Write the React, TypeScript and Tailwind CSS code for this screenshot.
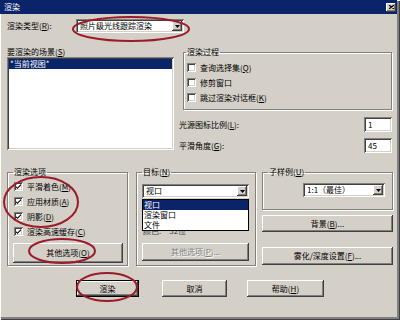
import React from "react";

const bevelOut =
  "shadow-[inset_-1px_-1px_#404040,inset_1px_1px_#ffffff,inset_-2px_-2px_#808080,inset_2px_2px_#d4d0c8]";
const bevelIn =
  "shadow-[inset_1px_1px_#808080,inset_-1px_-1px_#ffffff,inset_2px_2px_#404040,inset_-2px_-2px_#d4d0c8]";
const groupBox =
  "border border-[#808080] shadow-[inset_1px_1px_#ffffff,1px_1px_#ffffff]";

function U({ c }: { c: string }) {
  return <span className="underline">{c}</span>;
}

function Arrow() {
  return (
    <div className={`w-[10px] h-full flex items-center justify-center bg-[#d4d0c8] ${bevelOut}`}>
      <svg width="5" height="3" viewBox="0 0 5 3">
        <path d="M0 0h5L2.5 3z" fill="#000" />
      </svg>
    </div>
  );
}

function Combo({ text, className }: { text: React.ReactNode; className: string }) {
  return (
    <div className={`flex bg-white p-[2px] ${bevelIn} ${className}`}>
      <span className="flex-1 pl-[2px] flex items-center whitespace-nowrap">{text}</span>
      <Arrow />
    </div>
  );
}

function Check({ checked, label }: { checked?: boolean; label: React.ReactNode }) {
  return (
    <div className="flex items-center h-[15px] ml-[1px]">
      <div className={`w-[9px] h-[9px] bg-white flex items-center justify-center ${bevelIn}`}>
        {checked && (
          <svg width="5" height="5" viewBox="0 0 7 7">
            <path d="M0 3l2 2 5-5v2L2 7 0 5z" fill="#000" />
          </svg>
        )}
      </div>
      <span className="ml-[4px] whitespace-nowrap">{label}</span>
    </div>
  );
}

function Button({
  children,
  className,
  disabled,
}: {
  children: React.ReactNode;
  className: string;
  disabled?: boolean;
}) {
  return (
    <div
      className={`flex items-center justify-center bg-[#d4d0c8] ${bevelOut} ${
        disabled ? "text-[#808080] [text-shadow:1px_1px_0_#ffffff]" : ""
      } ${className}`}
    >
      {children}
    </div>
  );
}

export default function App() {
  return (
    <div className="relative w-[400px] h-[320px] overflow-hidden bg-[#d4d0c8] text-black text-[8px] leading-[10px] font-['Noto_Sans_CJK_SC','Noto_Sans',sans-serif] shadow-[inset_1px_1px_#ffffff,inset_-1px_-1px_#404040,inset_-3px_-3px_#808080]">
      {/* Title bar */}
      <div className="h-[14px] mr-[3px] bg-[#0a246a] flex items-center justify-between pl-[4px] pr-[1px]">
        <span className="text-white">渲染</span>
        <div className={`w-[10px] h-[9px] flex items-center justify-center bg-[#d4d0c8] ${bevelOut}`}>
          <svg width="5" height="4" viewBox="0 0 5 4">
            <path d="M0 0L5 4M5 0L0 4" stroke="#000" strokeWidth="1.2" />
          </svg>
        </div>
      </div>

      {/* Render type */}
      <div className="flex items-center pl-[7px] mt-[5px] h-[14px]">
        <span className="w-[69px]">
          渲染类型(<U c="R" />):
        </span>
        <Combo text="照片级光线跟踪渲染" className="w-[108px] h-[14px]" />
      </div>

      {/* Scenes + render procedure */}
      <div className="flex pl-[7px] mt-[14px]">
        <div className="flex flex-col w-[167px]">
          <span className="h-[10px]">
            要渲染的场景(<U c="S" />)
          </span>
          <div className={`h-[93px] bg-white p-[2px] ${bevelIn}`}>
            <div className="h-[10px] bg-[#0a246a] text-white pl-[1px]">*当前视图*</div>
          </div>
        </div>

        <div className="flex flex-col w-[209px] ml-[9px]">
          <fieldset className={`h-[63px] pl-[2px] pt-[3px] ${groupBox}`}>
            <legend className="px-[1px]">渲染过程</legend>
            <Check label={<>查询选择集(<U c="Q" />)</>} />
            <Check label="修剪窗口" />
            <Check label={<>跳过渲染对话框(<U c="K" />)</>} />
          </fieldset>
          <div className="flex items-center justify-between h-[15px] mt-[7px]">
            <span className="-ml-[4px]">
              光源图标比例(<U c="L" />):
            </span>
            <div className={`w-[28px] h-[15px] bg-white pl-[4px] flex items-center ${bevelIn}`}>1</div>
          </div>
          <div className="flex items-center justify-between h-[15px] mt-[6px]">
            <span className="-ml-[4px]">
              平滑角度(<U c="G" />):
            </span>
            <div className={`w-[28px] h-[15px] bg-white pl-[4px] flex items-center ${bevelIn}`}>45</div>
          </div>
        </div>
      </div>

      {/* Option groups */}
      <div className="flex items-start pl-[7px] mt-[14px]">
        <fieldset className={`w-[121px] h-[99px] pl-[5px] pr-[4px] pt-[2px] flex flex-col ${groupBox}`}>
          <legend className="ml-[0px] px-[1px]">渲染选项</legend>
          <Check checked label={<>平滑着色(<U c="M" />)</>} />
          <Check checked label={<>应用材质(<U c="A" />)</>} />
          <Check checked label={<>阴影(<U c="D" />)</>} />
          <Check checked label={<>渲染高速缓存(<U c="C" />)</>} />
          <Button className="h-[20px] mt-[4px]">
            其他选项(<U c="O" />)
          </Button>
        </fieldset>

        <fieldset className={`w-[120px] h-[99px] ml-[8px] pl-[5px] pr-[6px] flex flex-col ${groupBox}`}>
          <legend className="px-[1px]">
            目标(<U c="N" />)
          </legend>
          <div className="relative mt-[7px]">
            <Combo text="视口" className="w-[107px] h-[14px]" />
            <div className="absolute left-0 top-[15px] w-[107px] h-[32px] bg-white border border-black z-10">
              <div className="h-[10px] bg-[#0a246a] text-white pl-[1px]">视口</div>
              <div className="h-[10px] pl-[1px]">渲染窗口</div>
              <div className="h-[10px] pl-[1px]">文件</div>
            </div>
          </div>
          <div className="mt-[28px] h-[10px] pl-[1px] flex gap-[8px] text-[#404040]">
            <span>颜色:</span>
            <span>32位</span>
          </div>
          <Button disabled className="h-[18px] mt-[7px]">
            其他选项(<U c="P" />)...
          </Button>
        </fieldset>

        <div className="flex flex-col w-[131px] ml-[6px]">
          <fieldset className={`h-[43px] pl-[5px] ${groupBox}`}>
            <legend className="px-[1px]">
              子样例(<U c="U" />)
            </legend>
            <Combo text="1:1（最佳）" className="w-[82px] h-[14px] mt-[6px] ml-[35px]" />
          </fieldset>
          <Button className="h-[17px] mt-[5px]">
            背景(<U c="B" />)...
          </Button>
          <Button className="h-[18px] mt-[15px]">
            雾化/深度设置(<U c="F" />)...
          </Button>
        </div>
      </div>

      {/* Dialog buttons */}
      <div className="flex pl-[76px] mt-[14px]">
        <Button className="w-[63px] h-[17px] border border-black">渲染</Button>
        <Button className="w-[65px] h-[17px] ml-[23px]">取消</Button>
        <Button className="w-[77px] h-[17px] ml-[20px]">
          帮助(<U c="H" />)
        </Button>
      </div>

      {/* Red annotation marks */}
      <svg className="absolute inset-0 pointer-events-none" width="400" height="320" viewBox="0 0 400 320">
        <g fill="none" stroke="#9c1a2a" strokeWidth="2">
          <ellipse cx="131" cy="29" rx="58" ry="12" />
          <ellipse cx="41" cy="202" rx="37" ry="25" />
          <ellipse cx="62" cy="251" rx="33" ry="12" />
          <ellipse cx="107" cy="287" rx="30" ry="14" />
        </g>
      </svg>
    </div>
  );
}
